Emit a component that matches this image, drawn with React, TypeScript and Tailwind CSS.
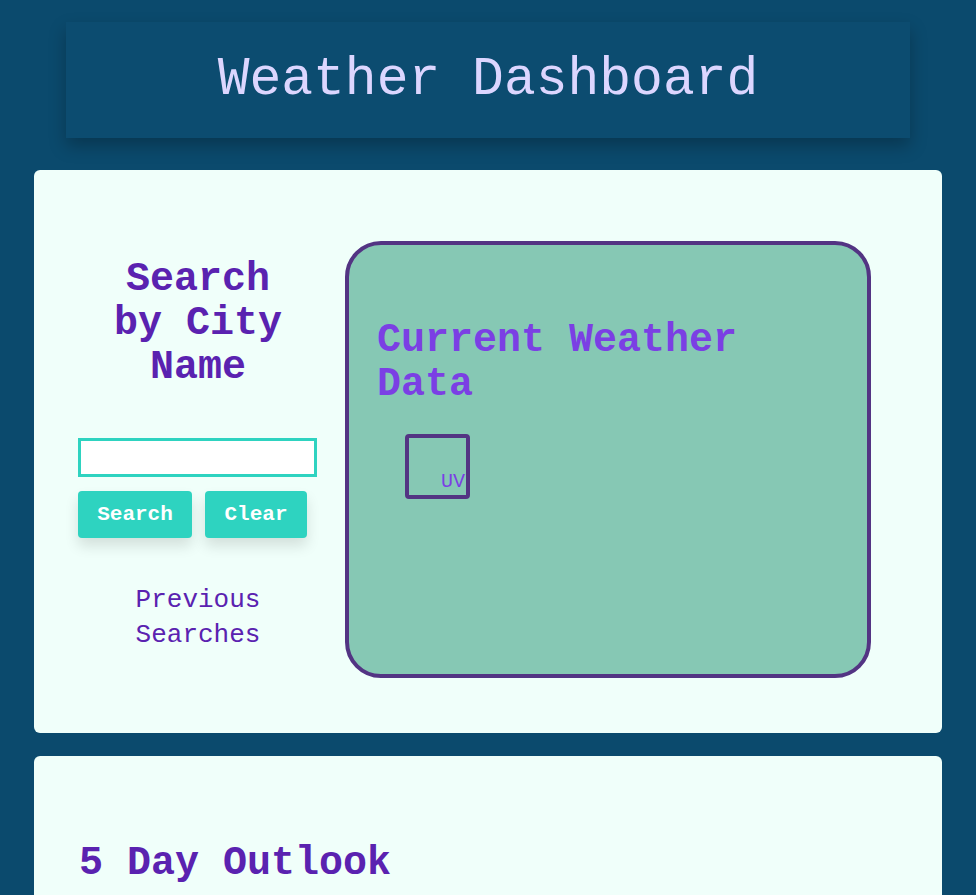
export default function App() {
  return (
    <div
      className="min-h-screen bg-[#0b4a6d] pt-[22px] pb-10"
      style={{ fontFamily: '"Liberation Mono", "Courier New", monospace' }}
    >
      {/* HEADER */}
      <header className="mx-[66px] h-[116px] bg-[#0c4c70] shadow-[0_8px_16px_rgba(0,0,0,0.25)] flex items-center justify-center">
        <h1 className="text-[53px] leading-none text-[#dcd6ff]">Weather Dashboard</h1>
      </header>

      {/* SEARCH + CURRENT */}
      <section className="mx-[34px] mt-[32px] bg-[#f0fffa] rounded-md pt-[71px] pb-[55px] pl-[44px] flex items-start">
        <div className="w-[240px] flex flex-col mt-[17px]">
          <h2 className="text-[40px] leading-[44px] font-bold text-center text-[#5a22b0]">
            Search
            <br />
            by City
            <br />
            Name
          </h2>
          <input
            type="text"
            className="mt-[48px] h-[39px] w-[239px] bg-white border-[3px] border-[#2ed3c0] outline-none"
          />
          <div className="mt-[14px] flex gap-[13px]">
            <button className="w-[114px] h-[47px] rounded bg-[#2ed3c0] text-white font-bold text-[21px] shadow-[0_8px_14px_rgba(0,0,0,0.12)]">
              Search
            </button>
            <button className="w-[102px] h-[47px] rounded bg-[#2ed3c0] text-white font-bold text-[21px] shadow-[0_8px_14px_rgba(0,0,0,0.12)]">
              Clear
            </button>
          </div>
          <p className="mt-[45px] text-[26px] leading-[35px] text-center text-[#5a22b0]">
            Previous
            <br />
            Searches
          </p>
        </div>

        <div className="ml-[27px] w-[526px] h-[437px] bg-[#86c8b4] border-4 border-[#533483] rounded-[36px] pl-[28px] pt-[74px]">
          <h2 className="w-[420px] text-[40px] leading-[44px] font-bold text-[#7b3fe4]">
            Current Weather Data
          </h2>
          <div className="mt-[27px] ml-[28px] w-[65px] h-[65px] border-4 border-[#533483] rounded flex items-end justify-end">
            <span className="text-[20px] leading-none text-[#7b3fe4] mb-[3px] mr-[1px]">UV</span>
          </div>
        </div>
      </section>

      {/* 5 DAY */}
      <section className="mx-[34px] mt-[23px] bg-[#f0fffa] rounded-md pt-[86px] pb-10 pl-[45px]">
        <h2 className="text-[40px] leading-[44px] font-bold text-[#5a22b0]">5 Day Outlook</h2>
      </section>
    </div>
  );
}
